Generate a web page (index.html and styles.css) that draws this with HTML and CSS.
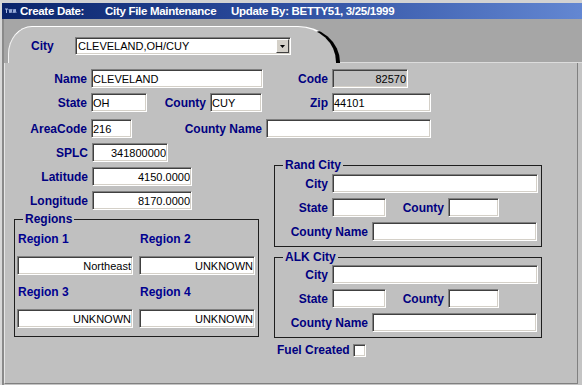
FILE: index.html
```html
<!DOCTYPE html>
<html>
<head>
<meta charset="utf-8">
<title>City File Maintenance</title>
<link rel="stylesheet" href="styles.css">
</head>
<body>
<div class="app">
  <div class="titlebar">
    <svg class="ticon" width="12" height="6" viewBox="0 0 12 6"><path d="M0 1h3M1.5 1v4M4 1l1 4 1-4 1 4M8 1l1 4 1-4 1 4" stroke="#b8c8f0" stroke-width="0.9" fill="none"/></svg>
    <span class="t1">Create Date:</span>
    <span class="t2">City File Maintenance</span>
    <span class="t3">Update By: BETTY51, 3/25/1999</span>
  </div>
  <div class="main">
    <div class="tabstrip">
      <div class="tab">
        <span class="lbl tab-lbl">City</span>
        <div class="combo">
          <span class="combo-text">CLEVELAND,OH/CUY</span>
          <span class="combo-btn"><svg width="5" height="3" viewBox="0 0 5 3"><path d="M0 0h5L2.5 3z" fill="#000"/></svg></span>
        </div>
      </div>
      <div class="tabline"></div>
    </div>
    <div class="panel">
      <div class="row r1">
        <span class="lbl">Name</span><input class="fld" readonly value="CLEVELAND">
        <span class="lbl">Code</span><input class="fld num dis" readonly value="82570">
      </div>
      <div class="row r2">
        <span class="lbl">State</span><input class="fld" readonly value="OH">
        <span class="lbl">County</span><input class="fld" readonly value="CUY">
        <span class="lbl">Zip</span><input class="fld" readonly value="44101">
      </div>
      <div class="row r3">
        <span class="lbl">AreaCode</span><input class="fld" readonly value="216">
        <span class="lbl">County Name</span><input class="fld" readonly value="">
      </div>
      <div class="lower">
        <div class="left">
          <div class="row r-splc">
            <span class="lbl">SPLC</span><input class="fld num" readonly value="341800000">
          </div>
          <div class="row r-lat">
            <span class="lbl">Latitude</span><input class="fld num" readonly value="4150.0000">
          </div>
          <div class="row r-lat">
            <span class="lbl">Longitude</span><input class="fld num" readonly value="8170.0000">
          </div>
          <fieldset class="grp regions">
            <legend>Regions</legend>
            <div class="regions-grid">
              <span class="rlbl">Region 1</span><span class="rlbl">Region 2</span>
              <input class="fld num" readonly value="Northeast"><input class="fld num" readonly value="UNKNOWN">
              <span class="rlbl">Region 3</span><span class="rlbl">Region 4</span>
              <input class="fld num" readonly value="UNKNOWN"><input class="fld num" readonly value="UNKNOWN">
            </div>
          </fieldset>
        </div>
        <div class="right">
          <fieldset class="grp city-grp">
            <legend>Rand City</legend>
            <div class="row rr1"><span class="lbl">City</span><input class="fld" readonly value=""></div>
            <div class="row rr2"><span class="lbl">State</span><input class="fld" readonly value=""><span class="lbl">County</span><input class="fld" readonly value=""></div>
            <div class="row rr3"><span class="lbl">County Name</span><input class="fld" readonly value=""></div>
          </fieldset>
          <fieldset class="grp city-grp alk">
            <legend>ALK City</legend>
            <div class="row rr1"><span class="lbl">City</span><input class="fld" readonly value=""></div>
            <div class="row rr2"><span class="lbl">State</span><input class="fld" readonly value=""><span class="lbl">County</span><input class="fld" readonly value=""></div>
            <div class="row rr3"><span class="lbl">County Name</span><input class="fld" readonly value=""></div>
          </fieldset>
          <div class="fuel">
            <span class="lbl plain">Fuel Created</span><span class="chk"></span>
          </div>
        </div>
      </div>
    </div>
  </div>
</div>
</body>
</html>
```

FILE: styles.css
```css
* { box-sizing: border-box; }
html, body { margin: 0; padding: 0; }
body {
  width: 582px;
  height: 385px;
  overflow: hidden;
  background: #c4c4c4;
  font-family: "Liberation Sans", Arial, sans-serif;
}
.app {
  height: 385px;
  display: flex;
  flex-direction: column;
  border-top: 3px solid #d2d2d2;
  border-left: 2px solid #d8d8d8;
}
.titlebar {
  height: 16px;
  flex: none;
  display: flex;
  align-items: center;
  background: linear-gradient(90deg, #0a246a 0%, #2a4a9c 45%, #6387d2 100%);
  color: #fff;
  font-weight: bold;
  font-size: 11.5px;
  letter-spacing: -0.3px;
  white-space: nowrap;
}
.ticon { flex: none; margin: 0 3px 0 3px; }
.t1 { width: 85px; flex: none; }
.t2 { width: 126px; flex: none; }
.main {
  flex: 1;
  display: flex;
  flex-direction: column;
  border-left: 2px solid #8a8a8a;
}
.tabstrip {
  height: 44px;
  flex: none;
  display: flex;
  align-items: flex-end;
  background: #a6a6a6;
  padding-left: 4px;
}
.tab {
  width: 332px;
  height: 37px;
  flex: none;
  background: #c0c0c0;
  border-top: 1px solid #fff;
  border-left: 1px solid #f2f2f2;
  border-right: 4px solid #000;
  border-radius: 24px 42px 0 0 / 28px 36px 0 0;
  padding-top: 10px;
  display: grid;
  grid-template-columns: 66px 216px;
  align-items: center;
  align-content: start;
}
.lbl.tab-lbl { text-align: left; padding: 0 0 0 22px; }
.tabline { flex: 1; height: 1px; background: #dcdcdc; }
.combo {
  height: 18px;
  background: #fff;
  border: 1px solid;
  border-color: #808080 #fff #fff #808080;
  box-shadow: inset 1px 1px 0 #404040, inset -1px -1px 0 #d4d0c8;
  display: flex;
  align-items: center;
  padding: 0 1px 0 2px;
}
.combo-text { flex: 1; font-size: 11px; color: #000; white-space: nowrap; }
.combo-btn {
  width: 13px;
  height: 14px;
  flex: none;
  background: #d4d0c8;
  border: 1px solid;
  border-color: #fff #404040 #404040 #fff;
  display: flex;
  align-items: center;
  justify-content: center;
}
.combo-btn svg { display: block; }
.panel {
  flex: 1;
  background: #c0c0c0;
  border-left: 1px solid #e6e6e6;
  border-right: 1px solid #808080;
  border-bottom: 1px solid #808080;
  margin: 0 4px 1px 0;
  padding-top: 6px;
}
.row { display: grid; align-items: center; height: 19px; }
.r1 { grid-template-columns: 86px 172px 69px 76px; }
.r2 { margin-top: 5px; grid-template-columns: 86px 56px 63px 52px 70px 99px; }
.r3 { margin-top: 7px; grid-template-columns: 86px 41px 134px 165px; }
.lower { display: flex; margin-top: 5px; }
.left { width: 269px; flex: none; }
.r-splc { grid-template-columns: 87px 76px; }
.r-lat { margin-top: 5px; grid-template-columns: 87px 100px; }
.lbl {
  font-weight: bold;
  font-size: 12px;
  line-height: 14px;
  color: #000080;
  text-align: right;
  padding-right: 4px;
  white-space: nowrap;
}
.lbl.plain { padding: 0; text-align: left; }
.fld {
  display: block;
  width: 100%;
  height: 19px;
  margin: 0;
  border: 1px solid;
  border-color: #808080 #fff #fff #808080;
  box-shadow: inset 1px 1px 0 #404040, inset -1px -1px 0 #d4d0c8;
  background: #fff;
  font: 11px "Liberation Sans", Arial, sans-serif;
  color: #000;
  padding: 0 1px;
  outline: none;
}
.fld.num { text-align: right; }
.fld.dis { background: #c0c0c0; }
.grp {
  margin: 0;
  border: 1px solid #1e1e1e;
  min-width: 0;
}
.grp legend {
  margin-left: 8px;
  padding: 0 2px;
  font-weight: bold;
  font-size: 12px;
  line-height: 14px;
  color: #000080;
}
.regions {
  margin: 2px 0 0 9px;
  width: 245px;
  padding: 6px 0 8px 2px;
}
.regions legend { margin-left: 6px; }
.regions-grid {
  display: grid;
  grid-template-columns: 116px 116px;
  grid-template-rows: 14px 19px 14px 19px;
  column-gap: 6px;
  row-gap: 10px;
  align-items: center;
}
.rlbl {
  font-weight: bold;
  font-size: 12px;
  line-height: 14px;
  color: #000090;
  padding-left: 1px;
  white-space: nowrap;
}
.right { width: 268px; flex: none; margin-top: 15px; }
.city-grp { width: 268px; padding: 2px 0 5px 0; }
.city-grp.alk { margin-top: 3px; padding-top: 1px; }
.rr1 { grid-template-columns: 57px 206px; }
.rr2 { margin-top: 5px; grid-template-columns: 57px 54px 62px 51px; }
.rr3 { margin-top: 5px; grid-template-columns: 97px 165px; }
.fuel {
  display: flex;
  align-items: center;
  margin-top: 5px;
  padding-left: 3px;
  gap: 3px;
}
.chk {
  width: 13px;
  height: 13px;
  flex: none;
  background: #fff;
  border: 1px solid;
  border-color: #808080 #fff #fff #808080;
  box-shadow: inset 1px 1px 0 #404040, inset -1px -1px 0 #d4d0c8;
}
```
